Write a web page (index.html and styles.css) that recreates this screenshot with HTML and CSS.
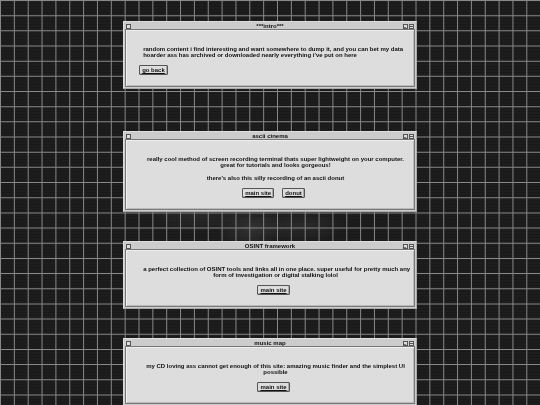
FILE: index.html
```html
<!DOCTYPE html>
<html lang="en">
<head>
    <meta charset="UTF-8">
    <meta name="viewport" content="width=device-width, initial-scale=1.0">
    <title>random content</title>
    <link rel="stylesheet" href="styles.css">
</head>
<body>
    <svg class="grid" viewBox="0 0 540 405" preserveAspectRatio="none" aria-hidden="true">
        <defs>
            <radialGradient id="smoke">
                <stop offset="0" stop-color="#fff" stop-opacity="0.1"/>
                <stop offset="1" stop-color="#fff" stop-opacity="0"/>
            </radialGradient>
        </defs>
        <!-- scanlines -->
        <line x1="270" y1="0" x2="270" y2="405" stroke="#191919" stroke-width="540" stroke-dasharray="1 2"/>
        <ellipse cx="250" cy="228" rx="34" ry="22" fill="url(#smoke)"/>
        <ellipse cx="195" cy="216" rx="50" ry="18" fill="url(#smoke)" opacity="0.6"/>
        <ellipse cx="300" cy="226" rx="50" ry="16" fill="url(#smoke)" opacity="0.7"/>
        <!-- vertical and horizontal rules -->
        <line x1="0" y1="202" x2="540" y2="202" stroke="#888" stroke-width="406" stroke-dasharray="1 12.85"/>
        <line x1="270" y1="0" x2="270" y2="405" stroke="#888" stroke-width="540" stroke-dasharray="1 14.17"/>
    </svg>

    <main class="desktop">
        <section class="window intro">
            <header class="title-bar">
                <span class="box"></span>
                <h2>***intro***</h2>
                <span class="box zoom"></span>
                <span class="box shade"></span>
            </header>
            <div class="content">
                <p>random content i find interesting and want somewhere to dump it, and you can bet my data<br>
                hoarder ass has archived or downloaded nearly everything i've put on here</p>
                <nav class="links">
                    <a class="btn" href="#">go back</a>
                </nav>
            </div>
        </section>

        <section class="window">
            <header class="title-bar">
                <span class="box"></span>
                <h2>ascii cinema</h2>
                <span class="box zoom"></span>
                <span class="box shade"></span>
            </header>
            <div class="content">
                <p>really cool method of screen recording terminal thats super lightweight on your computer.<br>
                great for tutorials and looks gorgeous!</p>
                <p>there's also this silly recording of an ascii donut</p>
                <nav class="links">
                    <a class="btn" href="#">main site</a>
                    <a class="btn" href="#">donut</a>
                </nav>
            </div>
        </section>

        <section class="window">
            <header class="title-bar">
                <span class="box"></span>
                <h2>OSINT framework</h2>
                <span class="box zoom"></span>
                <span class="box shade"></span>
            </header>
            <div class="content">
                <p>a perfect collection of OSINT tools and links all in one place. super useful for pretty much any<br>
                form of investigation or digital stalking lolol</p>
                <nav class="links">
                    <a class="btn" href="#">main site</a>
                </nav>
            </div>
        </section>

        <section class="window">
            <header class="title-bar">
                <span class="box"></span>
                <h2>music map</h2>
                <span class="box zoom"></span>
                <span class="box shade"></span>
            </header>
            <div class="content">
                <p>my CD loving ass cannot get enough of this site: amazing music finder and the simplest UI<br>
                possible</p>
                <nav class="links">
                    <a class="btn" href="#">main site</a>
                </nav>
            </div>
        </section>
    </main>
</body>
</html>
```
FILE: styles.css
```css
body {
    margin: 0;
    height: 100vh;
    overflow: hidden;
    background: #1d1d1d;
    color: #111;
    font-family: "Liberation Sans", Arial, sans-serif;
    font-size: 6px;
    font-weight: bold;
    line-height: 6px;
}

.grid {
    position: fixed;
    inset: 0;
    width: 100%;
    height: 100%;
    z-index: -1;
}

.desktop {
    display: flex;
    flex-direction: column;
    align-items: center;
    gap: 29px;
    padding-top: 21px;
}

.window {
    box-sizing: border-box;
    width: 54.4%;
    padding: 1px;
    background: #ccc;
    border: 1px solid #ddd;
    border-right-color: #aaa;
    border-bottom-color: #aaa;
    flex-shrink: 0;
}
.intro {
    margin-bottom: 13px;
}

.title-bar {
    display: flex;
    align-items: center;
    gap: 1px;
    height: 6px;
    padding: 0 1px;
}
.title-bar h2 {
    flex: 1;
    margin: 0;
    padding-left: 6px;
    font-size: 6px;
    line-height: 6px;
    text-align: center;
}

.box {
    box-sizing: border-box;
    width: 5px;
    height: 5px;
    border: 1px solid #555;
    background: #ddd;
}
.zoom {
    background: linear-gradient(#777, #777) left bottom / 2px 1px no-repeat #ddd;
}
.shade {
    background: linear-gradient(#555, #555) center / 3px 1px no-repeat #ddd;
}

.content {
    padding: 16px 6px 11px 13px;
    background: #ddd;
    border: 1px solid #777;
    box-shadow: inset 1px 1px #eee, inset -1px -1px #bbb;
    text-align: center;
}
.content p {
    margin: 0 0 7px 4px;
    white-space: nowrap;
}
.intro p {
    text-align: left;
}

.links {
    display: flex;
    justify-content: center;
    gap: 8px;
}
.intro .links {
    justify-content: flex-start;
}

.btn {
    padding: 1px 2px;
    border: 1px solid #555;
    border-radius: 1px;
    background: #ddd;
    box-shadow: inset -1px -1px #aaa;
    color: #111;
}
```
